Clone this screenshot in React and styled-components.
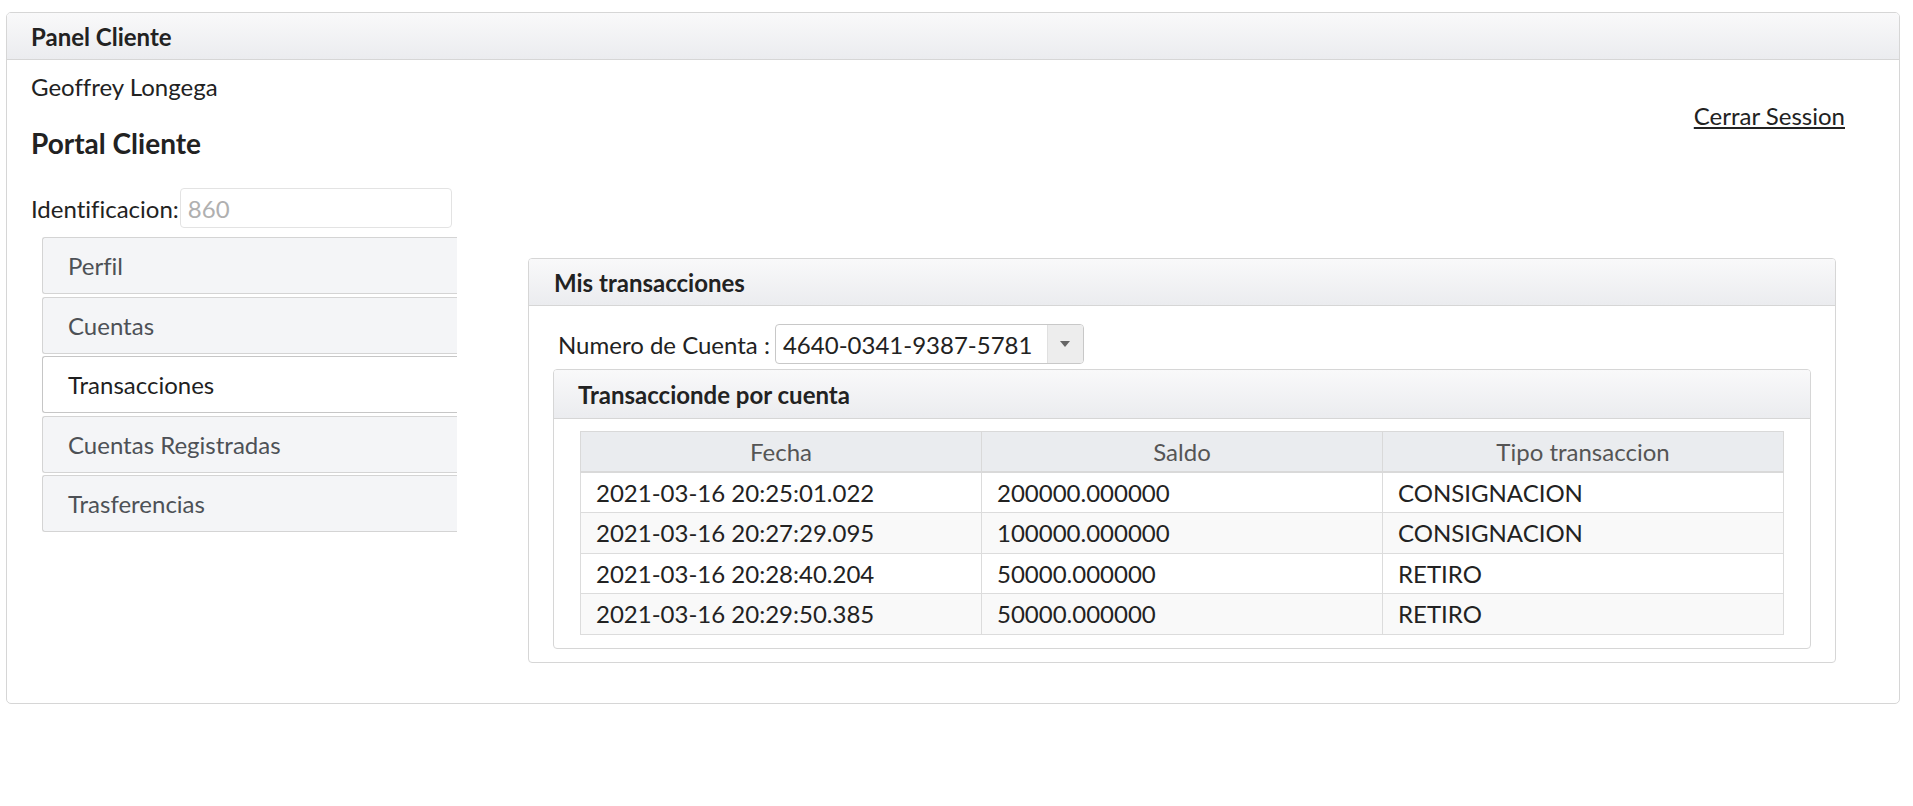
import React, { useState } from 'react';
import styled, { createGlobalStyle } from 'styled-components';

const GlobalStyle = createGlobalStyle`
  body {
    margin: 0;
    background: #ffffff;
    font-family: Lato, "Open Sans", sans-serif;
    font-variant-ligatures: none;
    color: #222222;
  }
`;

const tabs = ['Perfil', 'Cuentas', 'Transacciones', 'Cuentas Registradas', 'Trasferencias'];

const transacciones = [
  { fecha: '2021-03-16 20:25:01.022', saldo: '200000.000000', tipo: 'CONSIGNACION' },
  { fecha: '2021-03-16 20:27:29.095', saldo: '100000.000000', tipo: 'CONSIGNACION' },
  { fecha: '2021-03-16 20:28:40.204', saldo: '50000.000000', tipo: 'RETIRO' },
  { fecha: '2021-03-16 20:29:50.385', saldo: '50000.000000', tipo: 'RETIRO' },
];

const App = () => {
  const [active, setActive] = useState('Transacciones');

  return (
    <Page>
      <GlobalStyle />
      <Panel>
        <PanelHeader>Panel Cliente</PanelHeader>
        <PanelContent>
          <TopRow>
            <div>
              <UserName>Geoffrey Longega</UserName>
              <PortalTitle>Portal Cliente</PortalTitle>
            </div>
            <LogoutLink href="#">Cerrar Session</LogoutLink>
          </TopRow>

          <IdRow>
            <IdLabel>Identificacion:</IdLabel>
            <IdInput value="860" disabled readOnly />
          </IdRow>

          <TabView>
            <TabNav>
              {tabs.map(t => (
                <TabItem key={t} $active={t === active} onClick={() => setActive(t)}>
                  {t}
                </TabItem>
              ))}
            </TabNav>

            <TabContent>
              <SubPanel>
                <SubHeader>Mis transacciones</SubHeader>
                <SubBody>
                  <AccountRow>
                    <AccountLabel>Numero de Cuenta :</AccountLabel>
                    <Dropdown>
                      <DropdownLabel>4640-0341-9387-5781</DropdownLabel>
                      <DropdownTrigger>
                        <Caret />
                      </DropdownTrigger>
                    </Dropdown>
                  </AccountRow>

                  <InnerPanel>
                    <InnerHeader>Transaccionde por cuenta</InnerHeader>
                    <InnerBody>
                      <Table>
                        <thead>
                          <tr>
                            <Th>Fecha</Th>
                            <Th>Saldo</Th>
                            <Th>Tipo transaccion</Th>
                          </tr>
                        </thead>
                        <tbody>
                          {transacciones.map((r, i) => (
                            <Tr key={r.fecha} $odd={i % 2 === 1}>
                              <Td>{r.fecha}</Td>
                              <Td>{r.saldo}</Td>
                              <Td>{r.tipo}</Td>
                            </Tr>
                          ))}
                        </tbody>
                      </Table>
                    </InnerBody>
                  </InnerPanel>
                </SubBody>
              </SubPanel>
            </TabContent>
          </TabView>
        </PanelContent>
      </Panel>
    </Page>
  );
};

export default App;

const Page = styled.div`
  padding: 12px 13px 0 6px;
  font-size: 24px;
`;

const Panel = styled.div`
  border: 1px solid #d6d6d6;
  border-radius: 5px;
  overflow: hidden;
`;

const PanelHeader = styled.div`
  box-sizing: border-box;
  height: 47px;
  display: flex;
  align-items: center;
  padding: 0 24px;
  background: linear-gradient(to bottom, #f9f9fa, #ebecef);
  border-bottom: 1px solid #d6d6d6;
  font-weight: 700;
  color: #222;
`;

const PanelContent = styled.div`
  padding: 14px 24px 40px 24px;
`;

const TopRow = styled.div`
  display: flex;
  justify-content: space-between;
  align-items: flex-start;
`;

const UserName = styled.div`
  line-height: 26px;
  color: #222;
`;

const PortalTitle = styled.h3`
  margin: 26px 0 0;
  font-size: 28px;
  line-height: 34px;
  font-weight: 700;
  color: #222;
`;

const LogoutLink = styled.a`
  margin: 29px 30px 0 0;
  line-height: 26px;
  color: #222;
  text-decoration: underline;
`;

const IdRow = styled.div`
  display: flex;
  align-items: center;
  margin-top: 28px;
`;

const IdLabel = styled.label`
  color: #222;
`;

const IdInput = styled.input`
  box-sizing: border-box;
  width: 272px;
  height: 40px;
  margin-left: 1px;
  padding: 0 7px;
  border: 1px solid #e3e3e3;
  border-radius: 4px;
  background: #fff;
  font-family: inherit;
  font-size: 24px;
  color: #b0b0b0;
`;

const TabView = styled.div`
  display: flex;
  align-items: flex-start;
  margin-top: 9px;
  padding-left: 11px;
`;

const TabNav = styled.div`
  width: 415px;
  flex-shrink: 0;
  display: flex;
  flex-direction: column;
  gap: 2.5px;
`;

const TabItem = styled.div`
  box-sizing: border-box;
  height: 57px;
  display: flex;
  align-items: center;
  padding-left: 25px;
  border: 1px solid ${p => (p.$active ? '#c6c6c6' : '#d4d4d4')};
  border-right: none;
  border-radius: 3px 0 0 3px;
  background: ${p => (p.$active ? '#ffffff' : '#f4f5f7')};
  color: ${p => (p.$active ? '#1f1f1f' : '#4d5156')};
  cursor: pointer;
`;

const TabContent = styled.div`
  flex: 1;
  padding: 21px 39px 0 71px;
`;

const SubPanel = styled.div`
  border: 1px solid #d6d6d6;
  border-radius: 4px;
  overflow: hidden;
`;

const SubHeader = styled.div`
  box-sizing: border-box;
  height: 47px;
  display: flex;
  align-items: center;
  padding: 0 25px;
  background: linear-gradient(to bottom, #f9f9fa, #ebecef);
  border-bottom: 1px solid #d6d6d6;
  font-weight: 700;
  color: #222;
`;

const SubBody = styled.div`
  padding: 18px 24px 13px 24px;
`;

const AccountRow = styled.div`
  display: flex;
  align-items: center;
  padding-left: 5px;
`;

const AccountLabel = styled.span`
  margin-right: 5px;
  color: #222;
`;

const Dropdown = styled.div`
  box-sizing: border-box;
  display: flex;
  width: 309px;
  height: 40px;
  border: 1px solid #c8c8c8;
  border-radius: 4px;
  overflow: hidden;
`;

const DropdownLabel = styled.div`
  flex: 1;
  display: flex;
  align-items: center;
  padding-left: 7px;
  color: #222;
`;

const DropdownTrigger = styled.div`
  width: 35px;
  display: flex;
  align-items: center;
  justify-content: center;
  background: #ededed;
  border-left: 1px solid #e0e0e0;
`;

const Caret = styled.span`
  width: 0;
  height: 0;
  border-left: 5px solid transparent;
  border-right: 5px solid transparent;
  border-top: 6px solid #666;
`;

const InnerPanel = styled.div`
  margin-top: 5px;
  border: 1px solid #d6d6d6;
  border-radius: 4px;
  overflow: hidden;
`;

const InnerHeader = styled.div`
  box-sizing: border-box;
  height: 49px;
  display: flex;
  align-items: center;
  padding: 0 24px;
  background: linear-gradient(to bottom, #f9f9fa, #ebecef);
  border-bottom: 1px solid #d6d6d6;
  font-weight: 700;
  color: #222;
`;

const InnerBody = styled.div`
  padding: 12px 26px 13px 26px;
`;

const Table = styled.table`
  width: 100%;
  table-layout: fixed;
  border-collapse: collapse;
  font-size: 24px;
`;

const Th = styled.th`
  padding: 6.5px 15px 6px;
  line-height: 26px;
  background: #eaecef;
  border: 1px solid #d9d9d9;
  border-bottom: 2px solid #d9d9d9;
  font-weight: 400;
  color: #555;
  text-align: center;
`;

const Tr = styled.tr`
  background: ${p => (p.$odd ? '#f9f9f9' : '#ffffff')};
`;

const Td = styled.td`
  padding: 7px 15px 6.5px;
  line-height: 26px;
  border: 1px solid #dcdcdc;
  color: #222;
`;
